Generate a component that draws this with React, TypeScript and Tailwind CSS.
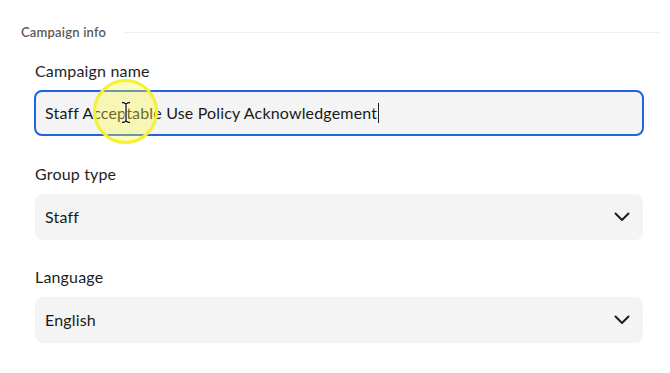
import React from "react";

const Chevron = () => (
  <svg width="16" height="10" viewBox="0 0 16 10" fill="none">
    <path d="M1.5 1.5 L8 8 L14.5 1.5" stroke="#1c1c1c" strokeWidth="2" strokeLinecap="round" strokeLinejoin="round" />
  </svg>
);

export default function App() {
  return (
    <div
      className="relative w-[670px] h-[373px] bg-white overflow-hidden"
      style={{ fontFamily: "Lato, 'Noto Sans', sans-serif" }}
    >
      <div className="flex items-center gap-[18px] pl-[21px] pr-[10px] pt-[24px]">
        <span className="text-[13px] leading-[16px] tracking-[0.2px] text-[#5a5a5a] font-semibold">Campaign info</span>
        <div className="flex-1 h-px bg-[#f0f0f0]" />
      </div>

      <div className="flex flex-col pl-[34px] pr-[26px] tracking-[0.17px]">
        <label className="mt-[21px] pl-[1px] text-[16px] leading-[20px] text-[#1e1e1e]">Campaign name</label>
        <div className="mt-[9px] h-[46px] flex items-center rounded-[8px] border-2 border-[#1f63e0] bg-[#f4f4f4] pl-[9px]">
          <span className="text-[16px] leading-[20px] text-[#1a1a1a]">Staff Acceptable Use Policy Acknowledgement</span>
          <span className="ml-[1px] w-px h-[20px] bg-[#222]" />
        </div>

        <label className="mt-[28px] pl-[1px] text-[16px] leading-[20px] text-[#1e1e1e]">Group type</label>
        <div className="mt-[10px] mx-[1px] h-[46px] flex items-center justify-between rounded-[8px] bg-[#f4f4f4] pl-[10px] pr-[13px]">
          <span className="text-[16px] leading-[20px] text-[#1a1a1a]">Staff</span>
          <Chevron />
        </div>

        <label className="mt-[27px] pl-[1px] text-[16px] leading-[20px] text-[#1e1e1e]">Language</label>
        <div className="mt-[10px] mx-[1px] h-[46px] flex items-center justify-between rounded-[8px] bg-[#f4f4f4] pl-[10px] pr-[13px]">
          <span className="text-[16px] leading-[20px] text-[#1a1a1a]">English</span>
          <Chevron />
        </div>
      </div>

      {/* cursor highlight */}
      <div className="absolute left-[93px] top-[79px] w-[65px] h-[65px] rounded-full border-[3px] border-[#f5f032] bg-[rgba(255,250,60,0.35)]" />
      <svg className="absolute left-[120px] top-[101px]" width="12" height="23" viewBox="0 0 12 23">
        <path d="M2 1.5 C4 1.5 5 2 6 3 C7 2 8 1.5 10 1.5 M6 3 V20 M2 21.5 C4 21.5 5 21 6 20 C7 21 8 21.5 10 21.5" stroke="#fff" strokeWidth="3" fill="none" />
        <path d="M2 1.5 C4 1.5 5 2 6 3 C7 2 8 1.5 10 1.5 M6 3 V20 M2 21.5 C4 21.5 5 21 6 20 C7 21 8 21.5 10 21.5" stroke="#111" strokeWidth="1.3" fill="none" />
      </svg>
    </div>
  );
}
